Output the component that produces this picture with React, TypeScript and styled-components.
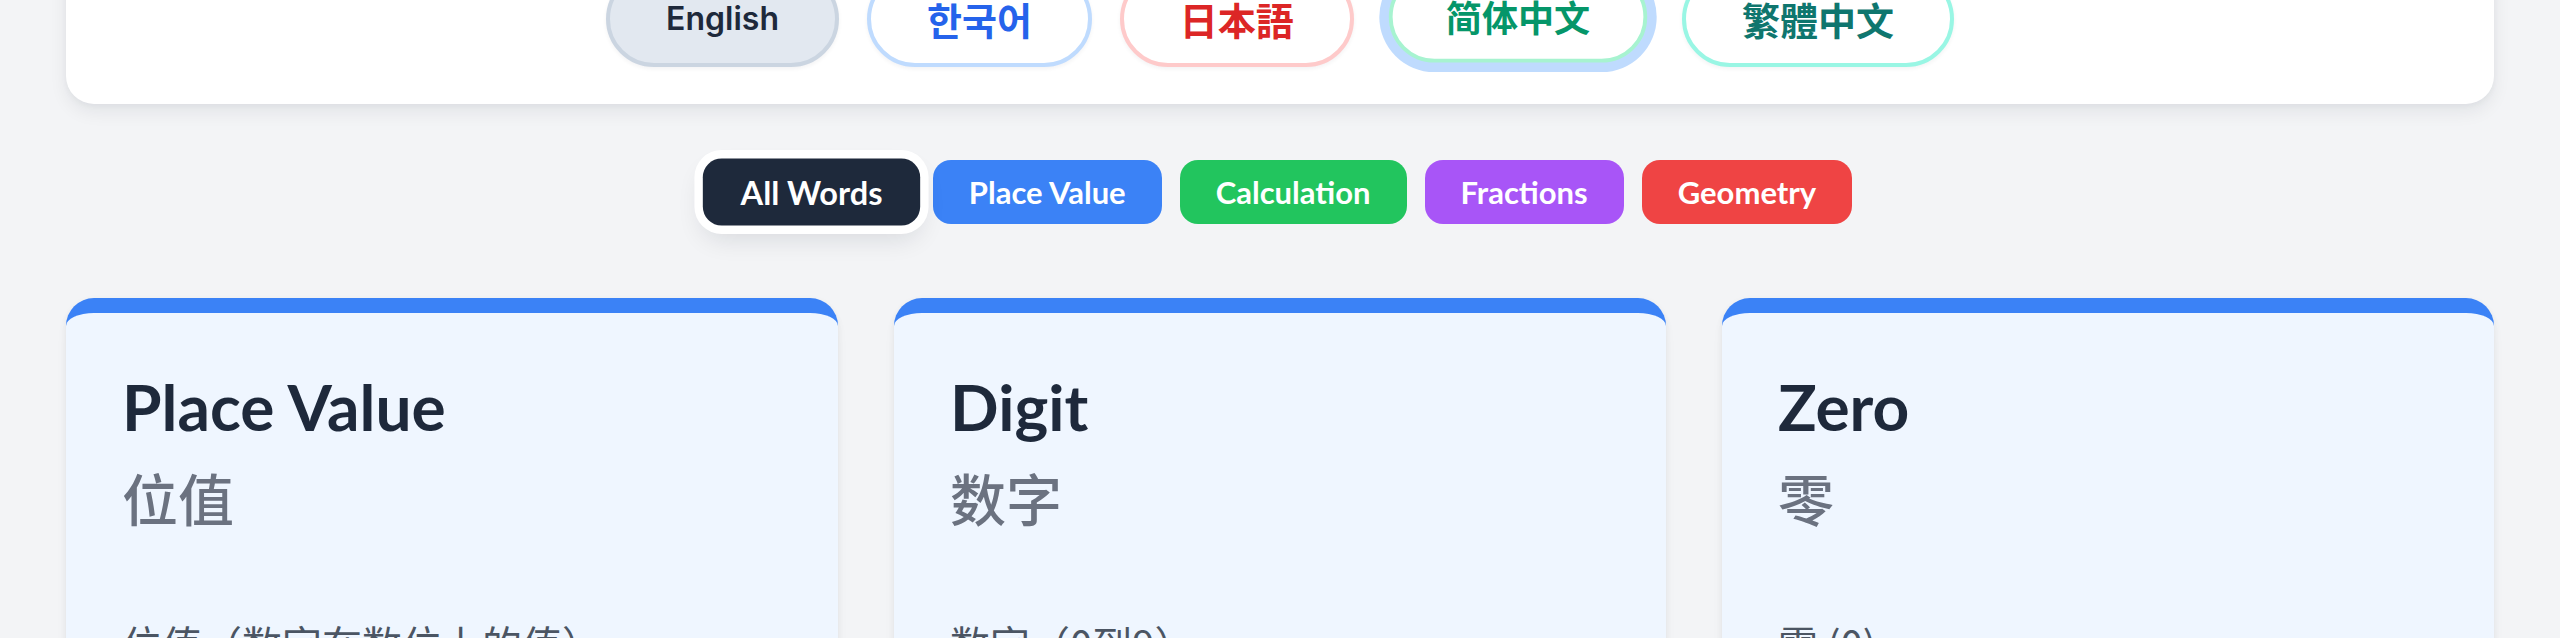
import styled, { createGlobalStyle } from 'styled-components'

const GlobalStyle = createGlobalStyle`
  html, body {
    margin: 0;
    padding: 0;
    background: #f3f4f6;
    overflow: hidden;
  }
  body {
    font-family: Lato, "Noto Sans CJK SC", sans-serif;
  }
`

type Tone = { bg: string; border: string; text: string }

const languages: { label: string; lang: string; cjk: boolean; tone: Tone; focused?: boolean }[] = [
  { label: 'English', lang: 'en', cjk: false, tone: { bg: '#e2e8f0', border: '#cbd5e1', text: '#1e293b' } },
  { label: '한국어', lang: 'ko', cjk: true, tone: { bg: '#ffffff', border: '#bfdbfe', text: '#2563eb' } },
  { label: '日本語', lang: 'ja', cjk: true, tone: { bg: '#ffffff', border: '#fecaca', text: '#dc2626' } },
  { label: '简体中文', lang: 'zh-CN', cjk: true, tone: { bg: '#ffffff', border: '#a7f3d0', text: '#059669' }, focused: true },
  { label: '繁體中文', lang: 'zh-TW', cjk: true, tone: { bg: '#ffffff', border: '#99f6e4', text: '#0f766e' } },
]

const categories = [
  { label: 'All Words', color: '#1e293b', active: true },
  { label: 'Place Value', color: '#3b82f6' },
  { label: 'Calculation', color: '#22c55e' },
  { label: 'Fractions', color: '#a855f7' },
  { label: 'Geometry', color: '#ef4444' },
]

const words = [
  { en: 'Place Value', zh: '位值', desc: '位值（数字在数位上的值）' },
  { en: 'Digit', zh: '数字', desc: '数字（0到9）' },
  { en: 'Zero', zh: '零', desc: '零 (0)' },
]

const Page = styled.div`
  padding: 0 66px;
  margin-top: -69px;
`

const Panel = styled.section`
  background: #ffffff;
  border-radius: 28px;
  padding: 40px 48px 37px;
  box-shadow: 0 8px 18px rgba(15, 23, 42, 0.07), 0 2px 6px rgba(15, 23, 42, 0.04);
`

const LangRow = styled.div`
  display: flex;
  justify-content: center;
  gap: 28px;
`

const LangButton = styled.button<{ $tone: Tone; $cjk: boolean; $focused?: boolean }>`
  border: 4px solid ${p => p.$tone.border};
  background: ${p => p.$tone.bg};
  color: ${p => p.$tone.text};
  border-radius: 999px;
  padding: 20px 56px;
  line-height: 48px;
  font-family: ${p => (p.$cjk ? '"Noto Sans CJK SC", sans-serif' : 'Inter, "Liberation Sans", sans-serif')};
  font-size: ${p => (p.$cjk ? '38px' : '32px')};
  font-weight: ${p => (p.$cjk ? 700 : 600)};
  box-shadow: ${p => (p.$focused ? '0 0 0 10px #bfdbfe' : '0 2px 4px rgba(15, 23, 42, 0.05)')};
  transform: ${p => (p.$focused ? 'translateY(-2px) scale(0.95)' : 'none')};
  cursor: pointer;
`

const ChipRow = styled.div`
  display: flex;
  justify-content: center;
  gap: 18px;
  margin-top: 56px;
`

const Chip = styled.button<{ $color: string; $active?: boolean }>`
  border: none;
  background: ${p => p.$color};
  color: #ffffff;
  border-radius: 18px;
  padding: 12px 36px;
  line-height: 40px;
  font-family: Lato, sans-serif;
  font-size: 31px;
  font-weight: 700;
  box-shadow: ${p => (p.$active ? '0 0 0 8px #ffffff, 0 12px 24px rgba(15, 23, 42, 0.12)' : 'none')};
  transform: ${p => (p.$active ? 'scale(1.05)' : 'none')};
  cursor: pointer;
`

const Grid = styled.div`
  display: grid;
  grid-template-columns: repeat(3, 1fr);
  gap: 56px;
  margin-top: 74px;
`

const Card = styled.article`
  background: #eff6ff;
  border-top: 15px solid #3b82f6;
  border-radius: 28px;
  padding: 54px 56px;
  min-height: 600px;
  box-shadow: 0 2px 6px rgba(15, 23, 42, 0.06), 0 8px 16px -4px rgba(15, 23, 42, 0.06);
`

const Title = styled.h2`
  margin: 0;
  font-family: Lato, sans-serif;
  font-size: 64px;
  line-height: 80px;
  font-weight: 700;
  color: #1e293b;
`

const Chinese = styled.div`
  margin-top: 8px;
  font-family: "Noto Sans CJK SC", sans-serif;
  font-size: 56px;
  line-height: 84px;
  font-weight: 500;
  color: #6b7280;
`

const Description = styled.p`
  margin: 74px 0 0;
  font-family: "Noto Sans CJK SC", sans-serif;
  font-size: 40px;
  line-height: 60px;
  color: #4b5563;
`

export default function App() {
  return (
    <>
      <GlobalStyle />
      <Page>
        <Panel>
          <LangRow>
            {languages.map(l => (
              <LangButton key={l.lang} lang={l.lang} $tone={l.tone} $cjk={l.cjk} $focused={l.focused}>
                {l.label}
              </LangButton>
            ))}
          </LangRow>
        </Panel>

        <ChipRow>
          {categories.map(c => (
            <Chip key={c.label} $color={c.color} $active={c.active}>
              {c.label}
            </Chip>
          ))}
        </ChipRow>

        <Grid>
          {words.map(w => (
            <Card key={w.en}>
              <Title>{w.en}</Title>
              <Chinese>{w.zh}</Chinese>
              <Description>{w.desc}</Description>
            </Card>
          ))}
        </Grid>
      </Page>
    </>
  )
}
